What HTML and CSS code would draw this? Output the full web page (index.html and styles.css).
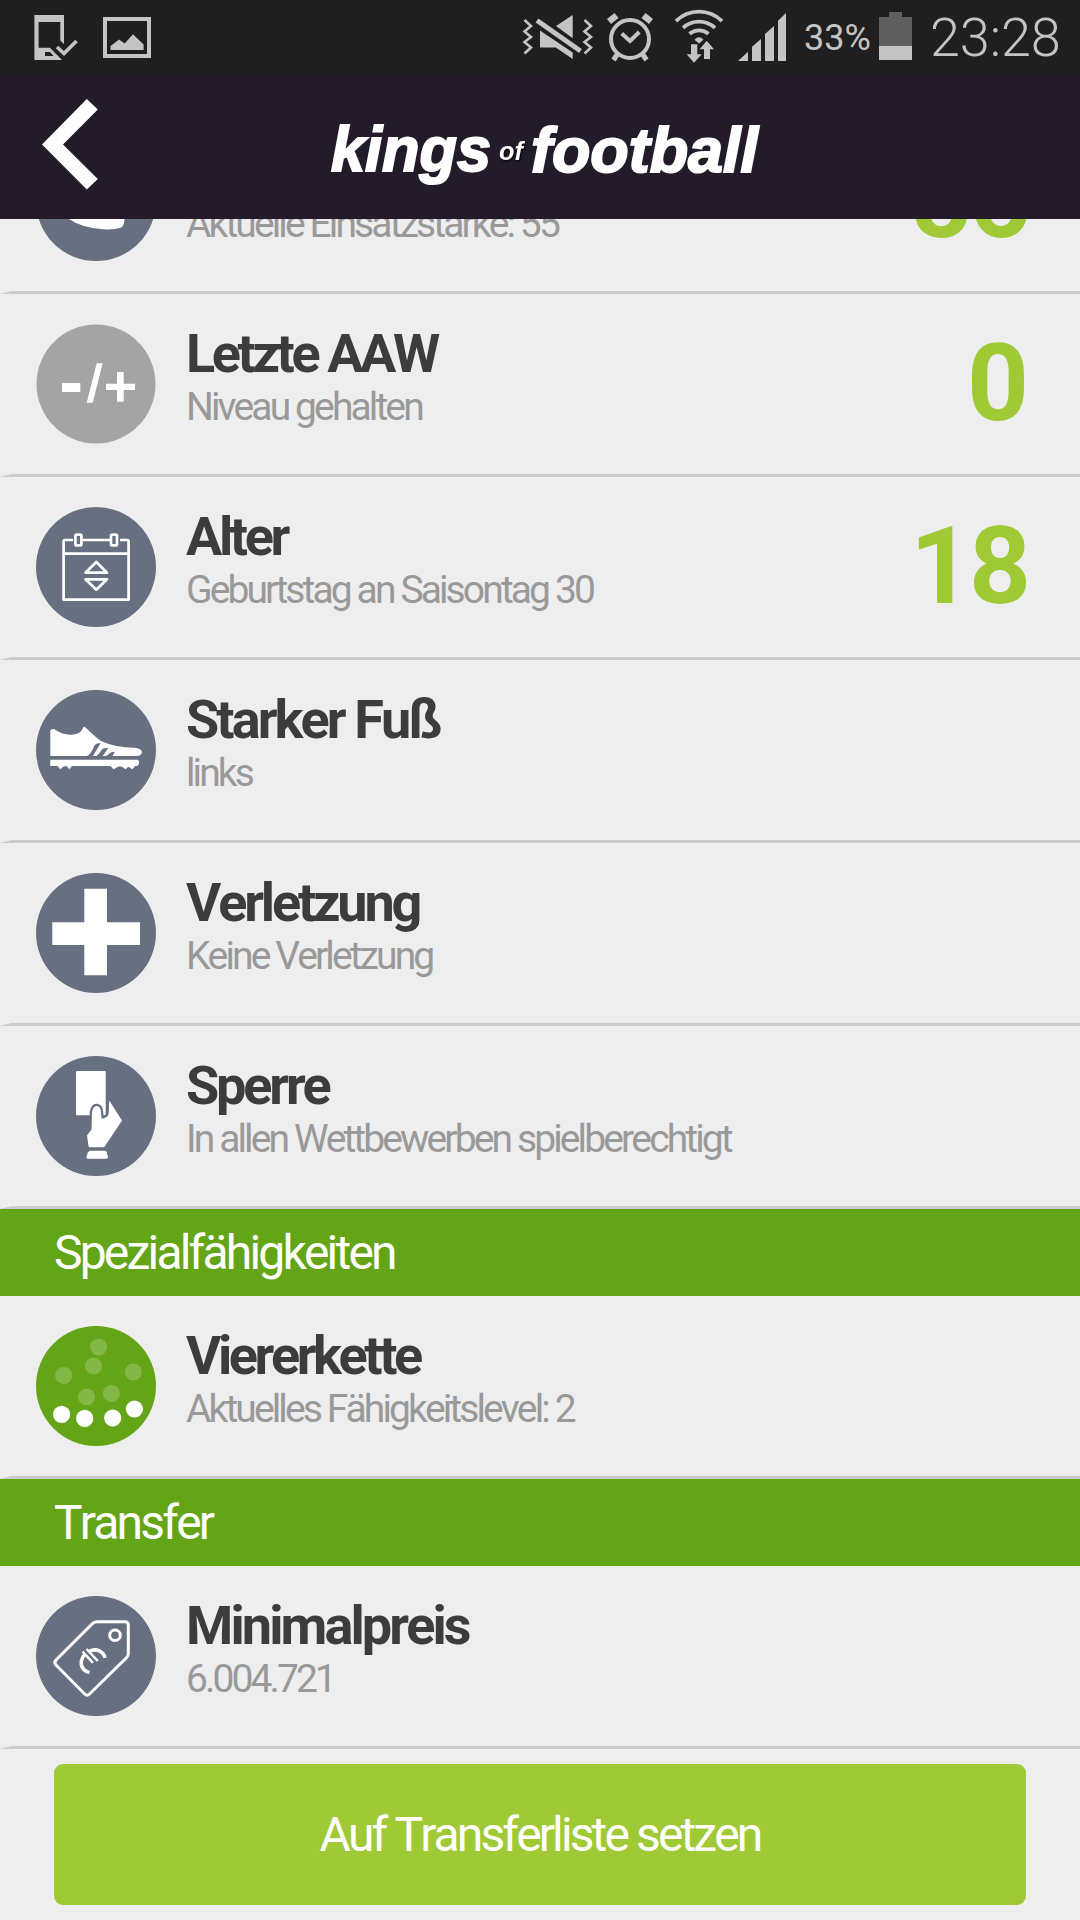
FILE: index.html
```
<!DOCTYPE html>
<html lang="de">
<head>
<meta charset="utf-8">
<title>Kings of Football</title>
<link rel="stylesheet" href="styles.css">
</head>
<body>
<div class="screen">
  <div class="statusbar">
    <svg class="notifications" width="120" height="75" viewBox="34 0 120 75" fill="#c4c4c4">
      <path fill-rule="evenodd" d="M34.400 15H64V44L60.300 40.500V22H38.600V47.700H50L62 60H34.400ZM45 52V56H53.500L50 52Z"/>
      <path d="M57 47 64 53.500 76.500 41" fill="none" stroke="#c4c4c4" stroke-width="3.600"/>
      <path fill-rule="evenodd" d="M103 17H151V58H103ZM107 21V54H147V21Z"/>
      <path d="M110.500 50V46L119 39.500 124.700 43.500 133 34.300 143.600 44.500V50Z"/>
    </svg>
    <div class="status-right">
      <svg class="system" width="282" height="75" viewBox="516 0 282 75" fill="#c4c4c4">
        <g fill="none" stroke="#c4c4c4">
          <path d="M524.500 20 531 26 524.500 31.500 531 37 524.500 42 531 47.500 524.500 53.500M584.500 20 591 26 584.500 31.500 591 37 584.500 42 591 47.500 584.500 53.500" stroke-width="2.600"/>
          <path d="M537 20.500 580.500 51" stroke-width="4.800"/>
          <circle cx="630" cy="39" r="19" stroke-width="4"/>
          <path d="M621.700 33.500 630 41 639.300 32" stroke-width="4"/>
          <path d="M609 21.500 616.500 15.500M651 21.500 643.500 15.500" stroke-width="6.500"/>
          <path d="M617.500 54 613.500 60M642.500 54 646.500 60" stroke-width="5"/>
          <path d="M676 21.200A32.600 32.600 0 0 1 722 21.200M683 27.800A23.600 23.600 0 0 1 715 27.800M689.500 33.800A14.600 14.600 0 0 1 708.500 33.800" stroke-width="3.800"/>
        </g>
        <path d="M572.700 15V38.300L556 26ZM540 30.500 572.700 52.500V59L555.700 47.500H540Z"/>
        <path d="M694.500 39.700Q699 35 703.500 39.700L699 43.500ZM691 44.300H697.300V54.300H701.700L694 62.700 686.700 54.300H691ZM706.700 40.700 714 49.300H710V59H704V49.300H699.700Z"/>
        <path d="M738 61H748V51.700ZM752 61V46.700L761 39V61ZM765 61V34L774 26V61ZM778 61V20.700L786 13V61Z"/>
      </svg>
      <span class="pct">33%</span>
      <svg class="battery" width="33" height="48" viewBox="0 0 33 48"><path fill="#5f5f5f" d="M10 0H23V5H33V34H0V5H10Z"/><path fill="#c4c4c4" d="M0 34H33V48H0Z"/></svg>
      <span class="clock">23:28</span>
    </div>
  </div>
  <header class="appbar">
    <svg class="back" width="60" height="92" viewBox="0 0 60 92"><path d="M46.800 1 57.800 11.500 23 46.500 57.800 81 46.800 91.500 2 46.500Z" fill="#fff"/></svg>
    <svg class="logo" width="450" height="90" viewBox="320 110 450 90" role="img" aria-label="kings of football">
      <text class="word" x="331" y="171" textLength="160" lengthAdjust="spacingAndGlyphs">kings</text>
      <text class="of" x="499" y="160" textLength="24" lengthAdjust="spacingAndGlyphs">of</text>
      <text class="word" x="531" y="172" textLength="227" lengthAdjust="spacingAndGlyphs">football</text>
    </svg>
  </header>
  <main class="list">
    <section class="row clipped">
      <svg class="icon" viewBox="0 0 120 120"><circle cx="60" cy="60" r="60"/><path fill="#fff" d="M33 78Q45 86.500 67 88.300 79 88.800 85 86.500 88.500 85 88.500 77V70H33Z"/></svg>
      <div class="txt"><h2>Stärke</h2><p>Aktuelle Einsatzstärke: 55</p></div><b class="num wide">56</b>
    </section>
    <section class="row">
      <svg class="icon" viewBox="0 0 120 120"><circle class="gray" cx="60" cy="60" r="59.500"/><path fill="#fff" d="M26 59H44.300V68H26ZM60.700 39.300H66.700L56.700 78.700H50.700ZM70 59.700H81V48H87.700V59.700H99V66H87.700V77.700H81V66H70Z"/></svg>
      <div class="txt"><h2 class="tight">Letzte AAW</h2><p>Niveau gehalten</p></div><b class="num">0</b>
    </section>
    <section class="row">
      <svg class="icon" viewBox="0 0 120 120"><circle cx="60" cy="60" r="60"/>
        <g fill="none" stroke="#fff" stroke-width="2.700" stroke-linejoin="round">
          <path d="M37 33H29Q27.600 33 27.600 34.500V92.600H92.600V34.500Q92.600 33 91 33H84M46.500 33H74M27.600 46.700H92.600"/>
          <rect x="39.400" y="27.700" width="6" height="10.700" rx="1.500"/><rect x="75" y="27.700" width="6" height="10.700" rx="1.500"/>
          <path d="M60.300 55 71 65.700H49.500ZM60.300 82.700 71 72.300H49.500Z"/>
        </g></svg>
      <div class="txt"><h2 class="tight">Alter</h2><p>Geburtstag an Saisontag 30</p></div><b class="num wide">18</b>
    </section>
    <section class="row">
      <svg class="icon" viewBox="0 0 120 120"><circle cx="60" cy="60" r="60"/>
        <path fill="#fff" d="M14.300 66V41Q14.800 38.800 18 39 26 44.500 34 44.700 41 44.800 44 42.300 46.500 40 47.300 37.300 48.500 36.600 50 38 60 47.500 65 51 79 57.500 98 57.700 106 58.500 106 62.500 105 66 100 66Z"/>
        <path d="M50.500 66.200Q54.500 65 58.500 55.500 60 52.800 64.600 53.300L56.700 66.200ZM60 66.200Q62.500 65 65.500 60 67 57.500 72.300 58L66.500 66.200ZM69.500 66.200Q71.500 65.500 74 63 76 61.700 79 61.800 78 63 76.500 66.200Z"/>
        <path fill="#fff" d="M14.300 69.700H101Q103 69.700 103 72.500 103 76 100 76H99L96.500 79.300 92.300 76.700 89.500 79.300 86 76.700 84 76.300 82 76.700 77.500 79.300 74.500 76H36L33.300 79.300 30.500 76 27.500 76.500 24.300 79.300 21.500 76H14.300Z"/></svg>
      <div class="txt"><h2 class="loose">Starker Fuß</h2><p>links</p></div>
    </section>
    <section class="row">
      <svg class="icon" viewBox="0 0 120 120"><circle cx="60" cy="60" r="60"/><path fill="#fff" d="M48.300 15.700H71V49.300H104V72H71V102.300H48.300V72H16.300V49.300H48.300Z"/></svg>
      <div class="txt"><h2>Verletzung</h2><p>Keine Verletzung</p></div>
    </section>
    <section class="row">
      <svg class="icon" viewBox="0 0 120 120"><circle cx="60" cy="60" r="60"/>
        <rect x="40" y="15" width="29.700" height="44.300" rx="1" fill="#fff"/>
        <path class="hand" fill="#fff" stroke-width="4.500" d="M55.500 73.500 56 56Q57 50 60.700 50 64.500 50.500 64.800 55L65.700 62.700Q72.500 62 72.800 56.500L73.200 44.500 86 64.500 69 90Q68.300 91.300 67 91.300H54Q52.700 91.300 52.500 90L51 79.500Z"/>
        <path fill="#fff" d="M54 94.700H69.500Q70.500 94.700 72 100.700 72 102.700 70.500 102.700H52Q50.300 102.700 50.400 100.700 52 94.700 54 94.700Z"/></svg>
      <div class="txt"><h2>Sperre</h2><p>In allen Wettbewerben spielberechtigt</p></div>
    </section>
    <h3 class="band">Spezialfähigkeiten</h3>
    <section class="row">
      <svg class="icon" viewBox="0 0 120 120"><circle class="green" cx="60" cy="60" r="60"/>
        <g class="faint"><circle cx="62.600" cy="21" r="8.600"/><circle cx="57.600" cy="40" r="8.600"/><circle cx="27.700" cy="49.400" r="8.600"/><circle cx="97.300" cy="46" r="8.600"/><circle cx="50.600" cy="71" r="8.600"/><circle cx="75.400" cy="67.400" r="8.600"/></g>
        <g class="solid"><circle cx="25.600" cy="88.400" r="8.600"/><circle cx="48.700" cy="92.400" r="8.600"/><circle cx="76.700" cy="92" r="8.600"/><circle cx="98.400" cy="83" r="8.600"/></g></svg>
      <div class="txt"><h2 class="tight">Viererkette</h2><p>Aktuelles Fähigkeitslevel: 2</p></div>
    </section>
    <h3 class="band">Transfer</h3>
    <section class="row">
      <svg class="icon" viewBox="0 0 120 120"><circle cx="60" cy="60" r="60"/>
        <g fill="none" stroke="#fff" stroke-width="3">
          <path d="M61 25.800H89Q92.300 25.800 92.300 29V57.500Q92.300 60 90.500 61.800L53.500 98Q51 100.300 48.700 98L20 69Q17.500 66.500 20 64L56 28Q58 25.800 61 25.800Z"/>
          <circle cx="79" cy="39.300" r="5.300"/>
          <path d="M69 61.800C67.500 55.500 60.500 51.500 53 55.500M49.500 58C43.500 63.500 43 73.500 53.500 76.500" stroke-width="3.600"/>
          <path d="M46.500 55.500 57 66.800M50.500 53 61.800 65" stroke-width="2.500"/>
        </g></svg>
      <div class="txt"><h2 class="loose">Minimalpreis</h2><p>6.004.721</p></div>
    </section>
  </main>
  <div class="actions"><button class="btn">Auf Transferliste setzen</button></div>
</div>
</body>
</html>
```
FILE: styles.css
```
* { box-sizing: border-box; margin: 0; }

body {
  background: #eee;
  font-family: Roboto, sans-serif;
  font-kerning: none;
  letter-spacing: -3px;
}

.screen {
  width: 1080px;
  height: 1920px;
  overflow: hidden;
  display: flex;
  flex-direction: column;
}

/* system status bar */
.statusbar {
  height: 75px;
  flex: none;
  background: #1f1f1f;
  color: #c4c4c4;
  display: flex;
  justify-content: space-between;
  padding: 0 19px 0 34px;
  letter-spacing: 0;
}
.status-right { display: flex; }
.system { margin-right: 6px; }
.pct { width: 75px; font-size: 36px; line-height: 76px; }
.battery { margin-top: 12px; }
.clock { width: 149px; padding-left: 18px; font-size: 54px; font-weight: 300; line-height: 75px; letter-spacing: -.1px; white-space: nowrap; }

/* app header */
.appbar {
  height: 144px;
  flex: none;
  background: #231b29;
  display: flex;
  position: relative;
  z-index: 1;
  padding: 23px 0 0 40px;
}
.logo { margin: 12px 0 0 220px; letter-spacing: 0; font-family: "Liberation Sans", Arial, sans-serif; font-style: italic; font-weight: 700; }
.word { font-size: 63px; fill: #fff; stroke: #fff; stroke-width: 2px; }
.of { font-size: 26px; fill: #fff; filter: drop-shadow(1px 1px 1px #000); }

/* attribute list */
.list { flex: none; }
.row {
  height: 183px;
  border-left: 12px solid transparent;
  border-bottom: 3px solid #cbcbcb;
  display: flex;
  padding: 30px 54px 0 24px;
}
.clipped { margin-top: -108px; }
.icon { width: 120px; height: 120px; flex: none; fill: #667081; }
.icon .gray { fill: #a4a4a4; }
.icon .green { fill: #63a517; }
.faint { fill: #83b746; }
.solid { fill: #fff; }
.hand { stroke: #667081; paint-order: stroke; }
.txt { margin-left: 30px; flex: 1; }
h2 { font-size: 54px; line-height: 60px; color: #3b3c3e; font-weight: 700; letter-spacing: -3.15px; }
h2.tight { letter-spacing: -3.4px; }
h2.loose { letter-spacing: -2.9px; }
p { font-size: 39px; line-height: 47px; color: #999; letter-spacing: -2.88px; }
.num { font-size: 108px; line-height: 118px; color: #a0c936; }
.num.wide { margin-right: -2px; }
.band {
  height: 87px;
  background: #63a517;
  color: #fff;
  font-weight: 400;
  font-size: 48px;
  line-height: 87px;
  padding-left: 54px;
  letter-spacing: -2.8px;
}

.actions { padding: 15px 54px; }
.btn {
  display: block;
  width: 100%;
  height: 141px;
  border: 0;
  border-radius: 9px;
  background: #a0c936;
  color: #fff;
  font: 400 48px Roboto, sans-serif;
  font-kerning: none;
  letter-spacing: -2.88px;
}
```
